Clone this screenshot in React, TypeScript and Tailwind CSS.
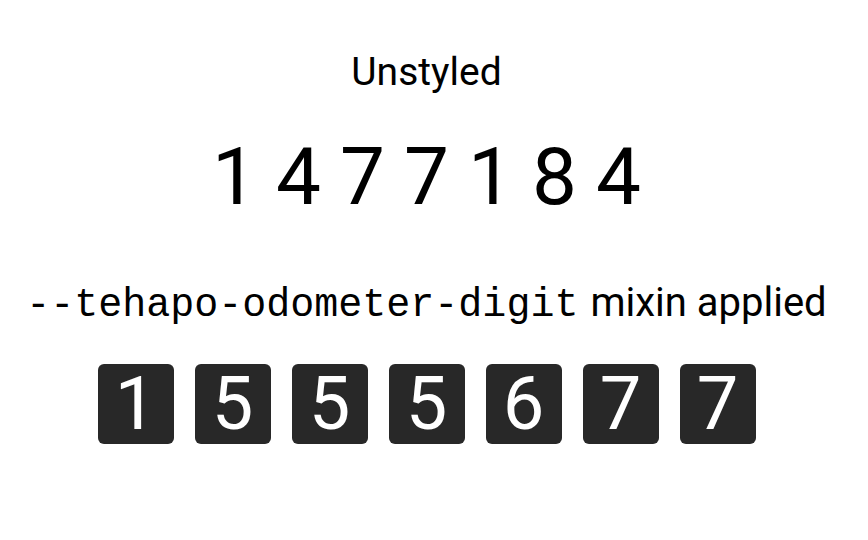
const unstyled = ["1", "4", "7", "7", "1", "8", "4"];
const styled = ["1", "5", "5", "5", "6", "7", "7"];

export default function App() {
  return (
    <div className="h-[540px] w-[868px] bg-white pr-[15px] text-black [font-family:Roboto,sans-serif]">
      <div className="flex flex-col items-center pt-[44px]">
        <h2 className="text-[39px] leading-[56px]">Unstyled</h2>

        <div className="mt-[37px] flex h-[80px] items-center gap-[19px] text-[80px] leading-none">
          {unstyled.map((d, i) => (
            <span key={i}>{d}</span>
          ))}
        </div>

        <h2 className="mt-[58px] flex items-baseline gap-[12px] text-[40px] leading-[56px]">
          <code className="[font-family:'Liberation_Mono',monospace]">--tehapo-odometer-digit</code>
          <span>mixin applied</span>
        </h2>

        <div className="mt-[30px] flex gap-[21px]">
          {styled.map((d, i) => (
            <div
              key={i}
              className="flex h-[80px] w-[76px] items-center justify-center rounded-[6px] bg-[#282828] text-[74px] leading-none text-white"
            >
              {d}
            </div>
          ))}
        </div>
      </div>
    </div>
  );
}
